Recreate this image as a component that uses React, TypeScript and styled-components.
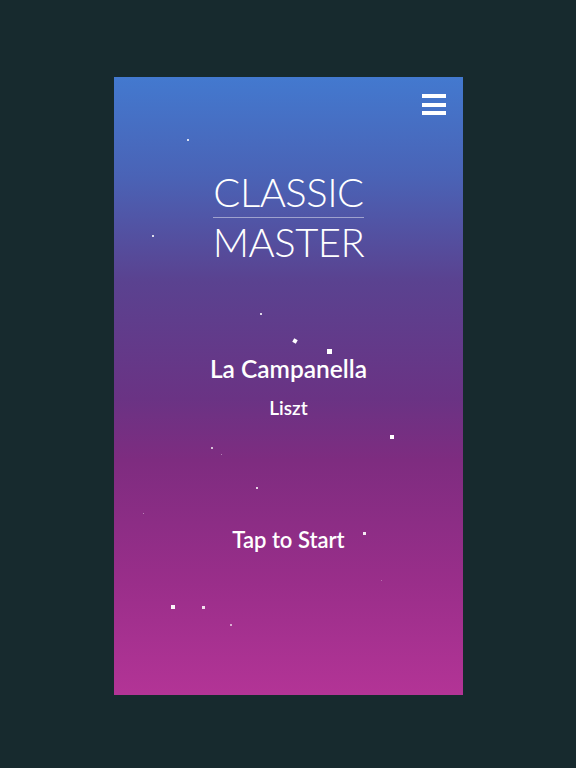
import { FC } from "react";
import styled, { createGlobalStyle } from "styled-components";

const GlobalStyle = createGlobalStyle`
    html, body {
        margin: 0;
        padding: 0;
        background-color: #172a2e;
    }
    #root {
        min-height: 100vh;
    }
`;

const StyledStage = styled.div`
    width: 576px;
    height: 768px;
    display: flex;
    align-items: flex-start;
    justify-content: center;
    padding-top: 77px;
    box-sizing: border-box;
    background-color: #172a2e;
    font-family: "Lato", "Open Sans", sans-serif;
`;

const StyledScreen = styled.div`
    position: relative;
    width: 349px;
    height: 618px;
    margin-left: 1px;
    display: flex;
    flex-direction: column;
    align-items: center;
    overflow: hidden;
    color: #fff;
    background: linear-gradient(
        180deg,
        #4379cf 0%,
        #4a63b6 16%,
        #5a4290 33%,
        #6a3384 52%,
        #7e2c80 62%,
        #9a2e8a 82%,
        #b33496 100%
    );

    .top-bar {
        align-self: stretch;
        display: flex;
        justify-content: flex-end;
        padding: 17px 17px 0 0;
        height: 38px;
    }

    .menu {
        display: flex;
        flex-direction: column;
        gap: 4.5px;
        width: 24px;
        cursor: pointer;
        & > span {
            display: block;
            height: 4px;
            background-color: #fff;
        }
    }
`;

const StyledLogo = styled.div`
    margin-top: 40px;
    display: flex;
    flex-direction: column;
    align-items: center;
    font-family: "Lato", sans-serif;
    font-weight: 300;
    font-size: 40px;
    line-height: 40px;
    letter-spacing: -0.5px;

    .word {
        display: block;
    }
    .rule {
        width: 151px;
        height: 1px;
        margin: 5px 0 4px;
        background-color: rgba(255, 255, 255, 0.45);
    }
`;

const StyledPiece = styled.div`
    margin-top: 93px;
    display: flex;
    flex-direction: column;
    align-items: center;

    h2 {
        margin: 0;
        font-size: 24.5px;
        font-weight: 600;
        line-height: 28px;
    }
    h3 {
        margin: 14px 0 0;
        font-size: 19px;
        font-weight: 600;
        line-height: 22px;
    }
`;

const StyledStart = styled.b`
    margin-top: 108px;
    font-size: 22px;
    font-weight: 600;
    line-height: 26px;
    cursor: pointer;
`;

const Star = styled.i<{ $size: number; $fade?: number; $turn?: number }>`
    position: absolute;
    width: ${(p) => p.$size}px;
    height: ${(p) => p.$size}px;
    background-color: #fff;
    opacity: ${(p) => p.$fade ?? 0.95};
    transform: rotate(${(p) => p.$turn ?? 0}deg);
`;

// screen-relative star positions (x, y, size, opacity, rotation)
const stars: [number, number, number, number?, number?][] = [
    [73, 62, 2, 0.8],
    [38, 158, 2, 0.8],
    [146, 236, 2, 0.8],
    [179, 262, 4, 1, 30],
    [213, 272, 5, 1],
    [276, 358, 4, 1],
    [97, 370, 2, 0.7],
    [107, 377, 1, 0.4],
    [142, 410, 2, 0.8],
    [29, 436, 1, 0.4],
    [249, 455, 3, 0.9],
    [267, 503, 1, 0.3],
    [57, 528, 4, 0.95],
    [88, 529, 3, 0.85],
    [116, 547, 2, 0.6],
];

const App: FC = () => {
    return (
        <StyledStage>
            <GlobalStyle />
            <StyledScreen>
                {stars.map(([x, y, s, o, r], i) => (
                    <Star key={i} $size={s} $fade={o} $turn={r} style={{ left: x, top: y }} />
                ))}
                <div className="top-bar">
                    <div className="menu">
                        <span />
                        <span />
                        <span />
                    </div>
                </div>
                <StyledLogo>
                    <span className="word">CLASSIC</span>
                    <div className="rule" />
                    <span className="word">MASTER</span>
                </StyledLogo>
                <StyledPiece>
                    <h2>La Campanella</h2>
                    <h3>Liszt</h3>
                </StyledPiece>
                <StyledStart>Tap to Start</StyledStart>
            </StyledScreen>
        </StyledStage>
    );
};

export default App;
